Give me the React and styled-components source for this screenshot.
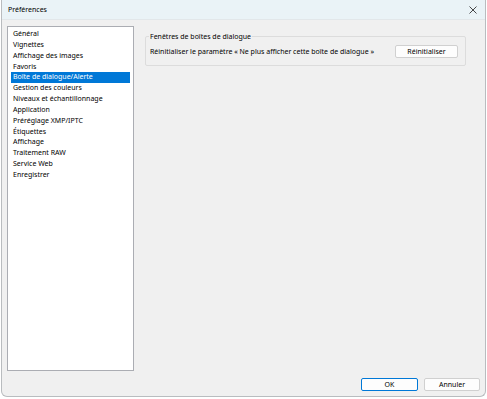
import React, { useState } from "react";
import styled, { createGlobalStyle } from "styled-components";

const GlobalStyle = createGlobalStyle`
  html, body {
    margin: 0;
    padding: 0;
    background: #ffffff;
  }
  body {
    font-family: "Noto Sans", "Open Sans", sans-serif;
    font-size: 7px;
    color: #000;
  }
`;

const Frame = styled.div`
  width: 487px;
  height: 399px;
  padding: 0 1px 2px 1px;
  box-sizing: border-box;
`;

const Window = styled.div`
  height: 100%;
  display: flex;
  flex-direction: column;
  border: 1px solid #b9bcbf;
  border-top: none;
  border-radius: 0 0 6px 6px;
  overflow: hidden;
  background: #f0f0f0;
  box-sizing: border-box;
`;

const TitleBar = styled.div`
  height: 19px;
  flex: none;
  display: flex;
  align-items: center;
  justify-content: space-between;
  padding: 0 6px 0 6px;
  background: #eaf3f7;
  border-bottom: 1px solid #e2e7ea;
`;

const Title = styled.span`
  font-size: 7px;
`;

const CloseButton = styled.button`
  border: none;
  background: transparent;
  padding: 0;
  width: 12px;
  height: 12px;
  display: flex;
  align-items: center;
  justify-content: center;
  cursor: pointer;
`;

const Body = styled.div`
  flex: 1;
  display: flex;
  flex-direction: column;
  padding: 6px 5px 5px 5px;
  min-height: 0;
`;

const Main = styled.div`
  flex: 1;
  display: flex;
  gap: 11px;
  min-height: 0;
`;

const List = styled.ul`
  width: 127px;
  flex: none;
  margin: 0;
  padding: 2px 3px;
  list-style: none;
  background: #ffffff;
  border: 1px solid #abadb3;
  box-sizing: border-box;
`;

const Item = styled.li`
  height: 10.85px;
  line-height: 10.85px;
  padding-left: 2px;
  white-space: nowrap;
  cursor: default;
  background: ${(p) => (p.$selected ? "#0078d7" : "transparent")};
  color: ${(p) => (p.$selected ? "#ffffff" : "#000000")};
`;

const Panel = styled.div`
  flex: 1;
  padding: 6px 14px 0 0;
`;

const GroupBox = styled.fieldset`
  margin: 0;
  padding: 4px 7px 7px 4px;
  border: 1px solid #dcdcdc;
  border-radius: 2px;
`;

const Legend = styled.legend`
  padding: 0 1px;
  margin-left: -1px;
  font-size: 7px;
  line-height: 9px;
`;

const Row = styled.div`
  display: flex;
  align-items: center;
  justify-content: space-between;
`;

const Label = styled.span`
  white-space: nowrap;
`;

const Button = styled.button`
  font-family: inherit;
  font-size: 7px;
  color: #000;
  height: 13px;
  width: ${(p) => p.$width || 57}px;
  padding: 0;
  background: #fdfdfd;
  border: 1px solid ${(p) => (p.$default ? "#0078d7" : "#d0d0d0")};
  border-radius: 2px;
  box-sizing: border-box;
  cursor: pointer;
`;

const Footer = styled.div`
  flex: none;
  display: flex;
  justify-content: flex-end;
  gap: 6px;
  padding: 7px 0 0 0;
`;

const sections = [
  "Général",
  "Vignettes",
  "Affichage des images",
  "Favoris",
  "Boîte de dialogue/Alerte",
  "Gestion des couleurs",
  "Niveaux et échantillonnage",
  "Application",
  "Préréglage XMP/IPTC",
  "Étiquettes",
  "Affichage",
  "Traitement RAW",
  "Service Web",
  "Enregistrer",
];

const CloseIcon = () => (
  <svg width="8" height="8" viewBox="0 0 8 8">
    <path d="M0.5 0.5 L7.5 7.5 M7.5 0.5 L0.5 7.5" stroke="#333" strokeWidth="0.9" />
  </svg>
);

const App = () => {
  const [selected, setSelected] = useState(4);

  return (
    <>
      <GlobalStyle />
      <Frame>
        <Window>
          <TitleBar>
            <Title>Préférences</Title>
            <CloseButton>
              <CloseIcon />
            </CloseButton>
          </TitleBar>
          <Body>
            <Main>
              <List>
                {sections.map((s, i) => (
                  <Item key={s} $selected={i === selected} onClick={() => setSelected(i)}>
                    {s}
                  </Item>
                ))}
              </List>
              <Panel>
                <GroupBox>
                  <Legend>Fenêtres de boîtes de dialogue</Legend>
                  <Row>
                    <Label>
                      Réinitialiser le paramètre « Ne plus afficher cette boîte de dialogue »
                    </Label>
                    <Button $width={63}>Réinitialiser</Button>
                  </Row>
                </GroupBox>
              </Panel>
            </Main>
            <Footer>
              <Button $default>OK</Button>
              <Button $width={56}>Annuler</Button>
            </Footer>
          </Body>
        </Window>
      </Frame>
    </>
  );
};

export default App;
